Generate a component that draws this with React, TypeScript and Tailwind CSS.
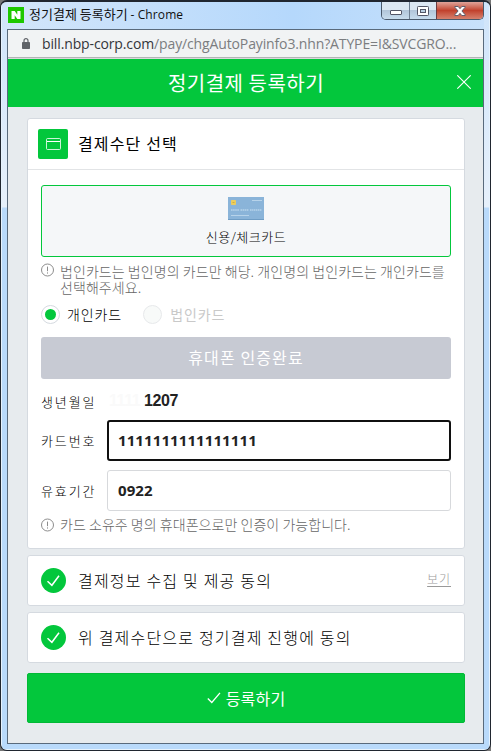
import { FC, ReactNode } from "react";

const LockIcon: FC = () => (
    <svg className="w-2 h-[11px]" viewBox="0 0 8 11">
        <path d="M2 4.5V2.7a2 2 0 0 1 4 0v1.8" fill="none" stroke="#5f6368" strokeWidth="1.2" />
        <rect y="4" width="8" height="7" rx="0.8" fill="#5f6368" />
    </svg>
);

const InfoIcon: FC = () => (
    <svg className="w-[14px] h-[14px] shrink-0" viewBox="0 0 14 14" fill="none" stroke="#8d8d8d">
        <circle cx="6.5" cy="7" r="6" />
        <path d="M6.5 3.6v4.6M6.5 9.4v1.2" />
    </svg>
);

const CreditCardIcon: FC = () => (
    <svg className="w-9 h-[23px]" viewBox="0 0 36 23">
        <rect width="36" height="23" fill="#8ab4d9" />
        <rect y="22" width="36" height="1" fill="#6f9dc5" />
        <rect x="3" y="3" width="5" height="5" rx="0.8" fill="#eccd5e" />
        <path d="M4.5 5.5h2" stroke="#d3ae3d" />
        <path d="M24 3.5h10M3 18.5h18" stroke="#b7d3ea" />
        <path d="M3 13h8M12.500 13h8M22 13h3M25.500 13h8" stroke="#b7d3ea" strokeWidth="1.6" strokeDasharray="1.6 .5" />
    </svg>
);

const CheckCircle: FC = () => (
    <svg className="w-[25px] h-[25px] shrink-0" viewBox="0 0 25 25">
        <circle cx="12.500" cy="12.500" r="12.500" fill="#03c73c" />
        <path d="M6.500 13.300l4.400 4L18 7.800" fill="none" stroke="#fff" strokeWidth="1.5" />
    </svg>
);

const TitleBar: FC = () => (
    <div className="h-[28px] flex justify-between bg-linear-to-r from-[#d3e6fa] via-[#b5d8fc] via-60% to-[#c8e1fb]">
        <div className="flex items-start">
            <svg className="w-4 h-4 mt-[5px] ml-px" viewBox="0 0 16 16">
                <rect width="16" height="16" fill="#1ec800" />
                <path d="M3.500 4h3.200l2.600 3.800V4h3.200v8H9.300L6.700 8.200V12H3.500z" fill="#fff" />
            </svg>
            <div className="ml-[5px] mt-[3px] h-[18px] leading-[18px] text-[13px] text-[#111] whitespace-nowrap">
                정기결제 등록하기 <span className="font-['Open_Sans'] text-xs tracking-[0.1px]">- Chrome</span>
            </div>
        </div>
        <div className="flex h-[18px] w-[103px] border border-t-0 border-[#49596b] rounded-b-[5px] overflow-hidden">
            <div className="w-[28px] flex items-center justify-center border-r border-[#6e7f92] bg-linear-to-b from-[#dbe7f2] from-45% via-[#b2c6da] via-50% to-[#c7dced]">
                <svg className="w-3 h-[5px] mt-[4px]" viewBox="0 0 12 5"><rect x=".5" y=".5" width="11" height="4" rx=".5" fill="#fff" stroke="#535666" /></svg>
            </div>
            <div className="w-[27px] flex items-center justify-center border-r border-[#6b3b40] bg-linear-to-b from-[#dbe7f2] from-45% via-[#b2c6da] via-50% to-[#c7dced]">
                <svg className="w-3 h-[10px]" viewBox="0 0 12 10">
                    <rect x=".5" y=".5" width="11" height="9" rx=".8" fill="#fff" stroke="#535666" />
                    <rect x="3.500" y="3.500" width="5" height="3" fill="#b9cfe1" stroke="#535666" />
                </svg>
            </div>
            <div className="flex-1 flex items-center justify-center bg-linear-to-b from-[#dfa39a] via-[#c1412d] via-50% to-[#d5806d]">
                <svg className="w-3 h-[10px]" viewBox="0 0 12 10">
                    <path d="M.8.5h3.400L6 2.700 7.800.5h3.400v.7L7.900 5l3.300 3.800v.7H7.800L6 7.300 4.200 9.500H.8v-.7L4.100 5 .8 1.200z" fill="#fff" stroke="#535666" strokeWidth=".9" />
                </svg>
            </div>
        </div>
    </div>
);

const Agreement: FC<{ children: ReactNode; link?: string }> = ({ children, link }) => (
    <div className="h-[51px] flex items-center px-[13px] bg-white border border-[#d5dae0] rounded-[3px]">
        <CheckCircle />
        <p className="ml-3 pb-[2px] flex-1 text-base font-light tracking-[1.2px] text-black whitespace-nowrap">{children}</p>
        {link && <a className="pb-[3px] text-xs font-light tracking-[0.9px] text-[#999] underline underline-offset-2">{link}</a>}
    </div>
);

const App: FC = () => (
    <div className="w-[491px] h-[751px] bg-[#777]">
        <div className="h-full flex flex-col border border-t-2 border-[#202630] rounded-[7px] overflow-hidden bg-[#b9dafb] font-['Noto_Sans_CJK_KR',sans-serif]">
            <div className="flex-1 flex flex-col min-h-0 px-[5px] pb-[5px] border border-t-0 border-[#e6f2fd] bg-[linear-gradient(#cfe4fa_0,#e6f0fb_205px,#b9dafb_206px)]">
                <TitleBar />
                <div className="-mt-px flex-1 flex flex-col border border-[#596a7c] bg-[#e7ebee]">
                    <div className="h-[27px] flex items-center pl-[14px] bg-[#f1f3f4]">
                        <LockIcon />
                        <p className="ml-[12px] font-['Open_Sans'] text-sm tracking-[-0.13px] whitespace-nowrap text-[#7b7d80]">
                            <span className="text-[#33363a]">bill.nbp-corp.com</span>/pay/chgAutoPayinfo3.nhn?ATYPE=I&amp;SVCGRO...
                        </p>
                    </div>
                    <div className="h-[2px] bg-[#d8dadb] border-t border-[#b2b4b6]" />
                    <div className="h-12 flex items-center bg-[#03c73c] text-white">
                        <h1 className="flex-1 pl-[27px] text-center text-xl tracking-[0.5px]">정기결제 등록하기</h1>
                        <svg className="w-[14px] h-[14px] mr-3 mb-[2px]" viewBox="0 0 14 14"><path d="M.3.3l13.400 13.400M13.700.3L.3 13.700" stroke="#fff" strokeWidth="1.1" /></svg>
                    </div>
                    <div className="pt-[11px] pl-[19px] pr-[18px] flex flex-col">
                        <section className="h-[431px] bg-white border border-[#d5dae0] rounded-[3px]">
                            <div className="h-[51px] flex items-center pl-[10px] border-b border-[#e2e4e6]">
                                <div className="w-[30px] h-[30px] flex items-center justify-center rounded-[2px] bg-[#03c73c]">
                                    <svg className="w-[15px] h-3" viewBox="0 0 15 12" fill="none" stroke="#fff">
                                        <rect x=".5" y=".5" width="14" height="11" rx="1" strokeOpacity=".8" />
                                        <path d="M1 3.500h13" />
                                    </svg>
                                </div>
                                <h2 className="ml-[10px] pb-[2px] text-base tracking-[1.15px] text-black">결제수단 선택</h2>
                            </div>
                            <div className="px-[13px] pt-[15px]">
                                <div className="h-[72px] flex flex-col items-center pt-[11px] border border-[#03c73c] rounded-[3px] bg-[#f5f7f9]">
                                    <CreditCardIcon />
                                    <p className="mt-2 text-[13px] leading-[18px] font-light tracking-[0.5px] text-black">신용/체크카드</p>
                                </div>
                                <div className="mt-[6px] flex">
                                    <InfoIcon />
                                    <p className="ml-[5px] text-sm leading-[16px] font-light tracking-[0.06px] text-[#666] whitespace-nowrap">
                                        법인카드는 법인명의 카드만 해당. 개인명의 법인카드는 개인카드를
                                        <br />
                                        선택해주세요.
                                    </p>
                                </div>
                                <div className="mt-[10px] h-[19px] flex items-center text-sm tracking-[0.9px]">
                                    <span className="w-[19px] h-[19px] flex items-center justify-center rounded-full border border-[#d5dae0]">
                                        <span className="w-[11px] h-[11px] rounded-full bg-[#03c73c]" />
                                    </span>
                                    <span className="ml-[7px] pb-[2px] font-light text-black">개인카드</span>
                                    <span className="ml-[21px] w-[19px] h-[19px] rounded-full border border-[#e7e9eb] bg-[#f8faf9]" />
                                    <span className="ml-2 pb-[2px] text-[#c9c9c9]">법인카드</span>
                                </div>
                                <button className="mt-[13px] h-[42px] w-full pb-[2px] rounded-[3px] bg-[#c7cad3] text-base tracking-[1.1px] text-white">
                                    휴대폰 인증완료
                                </button>
                                <div className="h-[41px] flex items-center text-[13px] tracking-[1.9px] text-black">
                                    <span className="w-[66px] mt-[5px] font-light">생년월일</span>
                                    <span className="mt-[3px] pl-[2px] font-['Liberation_Sans'] text-base font-bold tracking-[-0.4px] text-[#222]">
                                        <span className="inline-block w-[35px] overflow-hidden whitespace-nowrap align-bottom text-[#fafafa]">1111</span>1207
                                    </span>
                                </div>
                                <div className="flex items-center text-[13px] tracking-[1.9px] text-black">
                                    <span className="w-[66px] font-light">카드번호</span>
                                    <div className="h-[41px] flex-1 flex items-center pl-[9px] border-2 border-[#101010] rounded-[3px] font-['Open_Sans'] text-[15px] font-bold tracking-[0.1px] text-[#222]">
                                        1111111111111111
                                    </div>
                                </div>
                                <div className="mt-[9px] flex items-center text-[13px] tracking-[1.9px] text-black">
                                    <span className="w-[66px] font-light">유효기간</span>
                                    <div className="h-[41px] flex-1 flex items-center pl-[10px] border border-[#d7d9dc] rounded-[3px] font-['Open_Sans'] text-[15px] font-bold tracking-[0.1px] text-[#222]">
                                        0922
                                    </div>
                                </div>
                                <div className="mt-[7px] flex">
                                    <InfoIcon />
                                    <p className="ml-[5px] text-sm leading-[13px] font-light tracking-[0.04px] text-[#666] whitespace-nowrap">
                                        카드 소유주 명의 휴대폰으로만 인증이 가능합니다.
                                    </p>
                                </div>
                            </div>
                        </section>
                        <div className="mt-[6px] flex flex-col gap-[6px]">
                            <Agreement link="보기">결제정보 수집 및 제공 동의</Agreement>
                            <Agreement>위 결제수단으로 정기결제 진행에 동의</Agreement>
                        </div>
                        <button className="mt-[10px] h-[50px] flex items-center justify-center gap-[5px] rounded-[2px] border border-[#02b936] bg-[#03c73c] text-base tracking-[0.2px] text-white">
                            <svg className="w-[14px] h-3" viewBox="0 0 14 12"><path d="M.8 6.500l4 4L13 .8" fill="none" stroke="#fff" strokeWidth="1.3" /></svg>
                            <span className="pb-px">등록하기</span>
                        </button>
                    </div>
                </div>
            </div>
        </div>
    </div>
);

export default App;
